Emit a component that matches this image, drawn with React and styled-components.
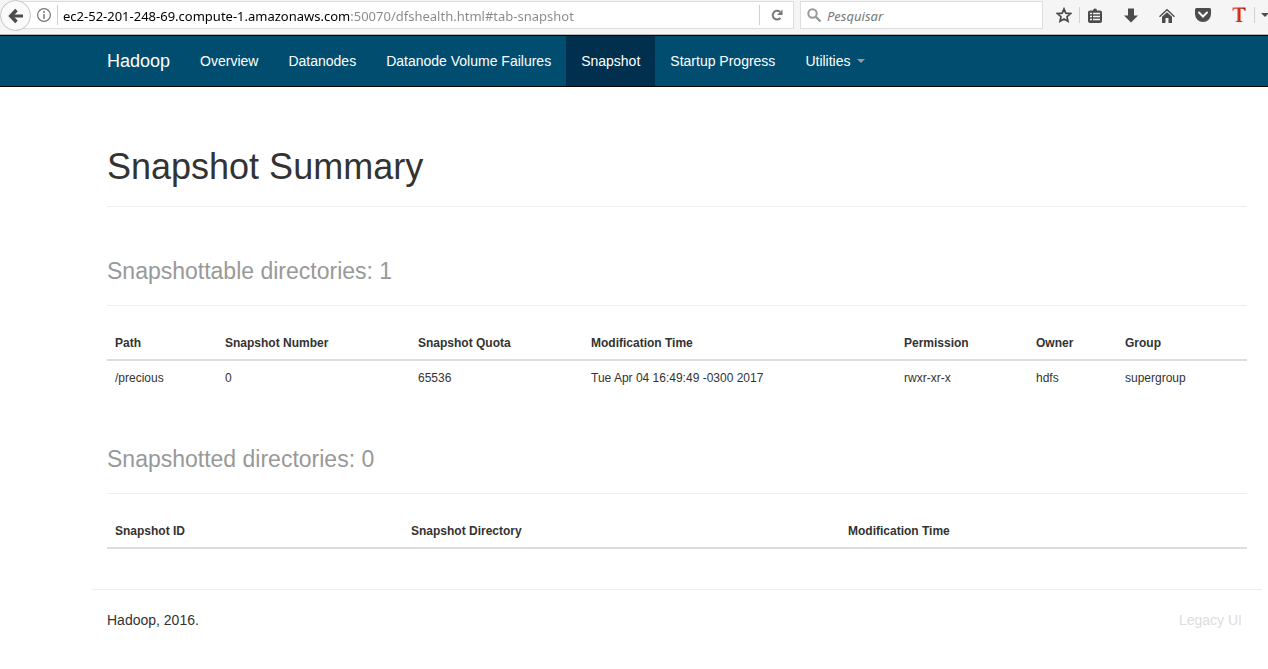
import React from "react";
import styled, { createGlobalStyle } from "styled-components";

const GlobalStyle = createGlobalStyle`
  *, *::before, *::after { box-sizing: border-box; }
  body {
    margin: 0;
    background: #fff;
    color: #333;
    font-family: "Liberation Sans", Arial, sans-serif;
    font-size: 14px;
    line-height: 20px;
  }
  button, input { font: inherit; color: inherit; }
`;

/* Browser toolbar */
const Toolbar = styled.header`
  display: flex;
  align-items: flex-start;
  height: 35px;
  padding-top: 1px;
  background: #f5f5f5;
  border-bottom: 1px solid #b8b8b8;
  font-family: "Noto Sans", "Open Sans", sans-serif;
  overflow: hidden;
`;

const IconButton = styled.button`
  display: flex;
  flex: none;
  align-items: center;
  justify-content: center;
  width: ${(p) => p.$width || 36}px;
  height: 28px;
  padding: 0;
  border: 0;
  background: none;
  color: #4c4c4c;
  svg { display: block; flex: none; }
`;

const BackButton = styled(IconButton)`
  position: relative;
  width: 31px;
  height: 31px;
  margin: -1px -20px 0 0;
  border: 1px solid #c4c4c4;
  border-radius: 50%;
  background: #fafafa;
`;

const OverflowButton = styled(IconButton)`
  justify-content: flex-start;
  padding-left: 6px;
`;

const AddressBar = styled.div`
  display: flex;
  flex: 1;
  align-items: center;
  min-width: 0;
  height: 28px;
  padding-left: 19px;
  background: #fff;
  border: 1px solid #dedede;
`;

const Separator = styled.span`
  flex: none;
  width: 1px;
  height: ${(p) => p.$height}px;
  background: #d0d0d0;
`;

const AddressInput = styled.input`
  flex: 1;
  min-width: 0;
  height: 26px;
  padding: 2px 0 0 5px;
  border: 0;
  outline: 0;
  font-size: 13px;
  color: #000;
  background: linear-gradient(to right, #000 292px, #888 292px);
  -webkit-background-clip: text;
  background-clip: text;
  -webkit-text-fill-color: transparent;
`;

const SearchBox = styled.label`
  display: flex;
  flex: none;
  align-items: center;
  gap: 5px;
  width: 243px;
  height: 28px;
  margin: 0 5px 0 6px;
  padding-left: 6px;
  background: #fff;
  border: 1px solid #dedede;
`;

const SearchInput = styled.input`
  flex: 1;
  min-width: 0;
  height: 26px;
  padding: 2px 0 0;
  border: 0;
  outline: 0;
  background: none;
  font-size: 13px;
  &::placeholder { color: #777; font-style: italic; opacity: 1; }
`;

const ToolbarActions = styled.div`
  display: flex;
  flex: none;
  align-items: center;
  height: 28px;
`;

/* Hadoop navigation */
const Navbar = styled.nav`
  display: flex;
  padding-left: 92px;
  background: #014d6f;
  border-top: 1px solid #000;
  border-bottom: 1px solid #000;
`;

const Brand = styled.a`
  padding: 15px;
  color: #fff;
  font-size: 18px;
  line-height: 20px;
  text-decoration: none;
`;

const NavList = styled.ul`
  display: flex;
  margin: 0;
  padding: 0;
  list-style: none;
`;

const NavLink = styled.a`
  display: flex;
  align-items: center;
  gap: 6px;
  padding: 15px;
  color: #fff;
  background: ${(p) => (p.$active ? "#00304d" : "transparent")};
  text-decoration: none;
`;

const Caret = styled.span`
  border-top: 4px solid #999;
  border-left: 4px solid transparent;
  border-right: 4px solid transparent;
`;

/* Page body */
const Container = styled.div`
  padding: 0 6px 0 92px;
`;

const Main = styled.main`
  padding: 60px 15px 40px;
`;

const PageTitle = styled.h1`
  margin: 0;
  padding-bottom: 19px;
  border-bottom: 1px solid #eee;
  font-size: 36px;
  font-weight: 400;
  line-height: 40px;
`;

const SectionTitle = styled.h2`
  margin: 51px 0 20px;
  padding-bottom: 21px;
  border-bottom: 1px solid #eee;
  color: #999;
  font-size: 23px;
  font-weight: 400;
  line-height: 26px;
`;

const DataTable = styled.table`
  width: 100%;
  table-layout: fixed;
  border-collapse: separate;
  border-spacing: 0;
  font-size: 12px;
  line-height: 17px;
`;

const Column = styled.col`
  width: ${(p) => p.$width}px;
`;

const HeadCell = styled.th`
  padding: 9px 8px 7px;
  border-bottom: 2px solid #ddd;
  text-align: left;
`;

const Cell = styled.td`
  padding: 9px 8px 8px;
`;

const Footer = styled.footer`
  display: flex;
  justify-content: space-between;
  padding: 20px 20px 20px 15px;
  border-top: 1px solid #eee;
`;

const LegacyLink = styled.a`
  color: #ddd;
  text-decoration: none;
`;

const navItems = ["Overview", "Datanodes", "Datanode Volume Failures", "Snapshot", "Startup Progress", "Utilities"];

const snapshottable = {
  columns: [
    ["Path", 110],
    ["Snapshot Number", 193],
    ["Snapshot Quota", 173],
    ["Modification Time", 313],
    ["Permission", 132],
    ["Owner", 89],
    ["Group", 130],
  ],
  rows: [["/precious", "0", "65536", "Tue Apr 04 16:49:49 -0300 2017", "rwxr-xr-x", "hdfs", "supergroup"]],
};

const snapshotted = {
  columns: [
    ["Snapshot ID", 296],
    ["Snapshot Directory", 437],
    ["Modification Time", 407],
  ],
  rows: [],
};

function DirectoryTable({ data, label }) {
  return (
    <DataTable aria-label={label}>
      <colgroup>
        {data.columns.map(([name, width]) => <Column key={name} $width={width} />)}
      </colgroup>
      <thead>
        <tr>{data.columns.map(([name]) => <HeadCell key={name} scope="col">{name}</HeadCell>)}</tr>
      </thead>
      {data.rows.length > 0 && (
        <tbody>
          {data.rows.map((row) => (
            <tr key={row[0]}>{row.map((value) => <Cell key={value}>{value}</Cell>)}</tr>
          ))}
        </tbody>
      )}
    </DataTable>
  );
}

function BrowserToolbar() {
  return (
    <Toolbar>
      <BackButton aria-label="Back">
        <svg width="16" height="16" viewBox="0 0 16 16" fill="none" stroke="#4c4c4c">
          <path d="M8.500 2 2.800 8l5.700 6" strokeWidth="3.600" />
          <path d="M3 8h12" strokeWidth="3" />
        </svg>
      </BackButton>
      <AddressBar>
        <IconButton $width={26} aria-label="Site information">
          <svg width="14" height="14" viewBox="0 0 14 14" fill="none" stroke="#777">
            <circle cx="7" cy="7" r="6.400" strokeWidth="1.200" />
            <path d="M7 6v5M7 3v2" strokeWidth="1.500" />
          </svg>
        </IconButton>
        <Separator $height={20} />
        <AddressInput
          aria-label="Address"
          defaultValue="ec2-52-201-248-69.compute-1.amazonaws.com:50070/dfshealth.html#tab-snapshot"
        />
        <Separator $height={20} />
        <IconButton $width={33} aria-label="Reload">
          <svg width="12" height="12" viewBox="0 0 12 12" fill="none">
            <path d="M9.500 9A4.400 4.400 0 1 1 9 2.800" stroke="#777" strokeWidth="2" />
            <path d="M11.500.500V6H6z" fill="#777" />
          </svg>
        </IconButton>
      </AddressBar>
      <SearchBox>
        <svg width="15" height="15" viewBox="0 0 15 15" fill="none" stroke="#999">
          <circle cx="5.500" cy="5.500" r="4.200" strokeWidth="2" />
          <path d="m8.500 8.500 5 5" strokeWidth="2.400" />
        </svg>
        <SearchInput aria-label="Search" placeholder="Pesquisar" />
      </SearchBox>
      <ToolbarActions>
        <IconButton $width={31} aria-label="Bookmark this page">
          <svg width="16" height="16" viewBox="0 0 16 16" fill="none" stroke="#4c4c4c" strokeWidth="1.700">
            <path d="m8 1.900 1.800 4.300 4.700.4-3.500 3.100 1 4.600L8 11.900l-4 2.400 1-4.600L1.500 6.600l4.700-.4z" />
          </svg>
        </IconButton>
        <Separator $height={16} />
        <IconButton $width={30} aria-label="Show bookmarks">
          <svg width="14" height="15" viewBox="0 0 14 15">
            <path d="M2 2.500h3a2 2 0 0 1 4 0h3a2 2 0 0 1 2 2V13a2 2 0 0 1-2 2H2a2 2 0 0 1-2-2V4.500a2 2 0 0 1 2-2z" fill="#4c4c4c" />
            <path d="M2 5.500h2M5 5.500h7M2 8.500h2M5 8.500h7M2 11.500h2M5 11.500h7" stroke="#f5f5f5" strokeWidth="1.500" />
          </svg>
        </IconButton>
        <IconButton $width={41} aria-label="Downloads">
          <svg width="14" height="15" viewBox="0 0 14 15" fill="#4c4c4c"><path d="M4 .500h6v7h4l-7 7-7-7h4z" /></svg>
        </IconButton>
        <IconButton $width={31} aria-label="Home">
          <svg width="16" height="15" viewBox="0 0 16 15" fill="#4c4c4c">
            <path d="m8 4.200 5 4.600V15H9.500v-5h-3v5H3V8.800z" />
            <path d="m.5 8.700 7.500-7 7.500 7" fill="none" stroke="#4c4c4c" strokeWidth="1.300" />
          </svg>
        </IconButton>
        <IconButton $width={41} aria-label="Save to Pocket">
          <svg width="16" height="14" viewBox="0 0 16 14">
            <path d="M1.500 0h13A1.500 1.500 0 0 1 16 1.500V6A8 8 0 0 1 0 6V1.500A1.500 1.500 0 0 1 1.500 0z" fill="#4c4c4c" />
            <path d="m4 4.500 4 4 4-4" fill="none" stroke="#f5f5f5" strokeWidth="2" strokeLinecap="round" />
          </svg>
        </IconButton>
        <IconButton $width={31} aria-label="T extension">
          <svg width="14" height="16" viewBox="0 0 14 16">
            <defs>
              <linearGradient id="extension-red" x1="0" x2="1">
                <stop offset="0" stopColor="#e8604c" />
                <stop offset="0.500" stopColor="#d42d17" />
                <stop offset="1" stopColor="#a31408" />
              </linearGradient>
            </defs>
            <path d="M.5.500h13v3.500h-.8c-.3-1.800-1-2.300-4.200-2.300v12l1.800.600v.700H3.700v-.700l1.800-.600v-12c-3.200 0-3.900.500-4.200 2.300H.5z" fill="url(#extension-red)" />
          </svg>
        </IconButton>
        <Separator $height={16} />
        <OverflowButton $width={13} aria-label="More tools">
          <svg width="8" height="4" viewBox="0 0 8 4" fill="#4c4c4c"><path d="M0 0h8L4 4z" /></svg>
        </OverflowButton>
      </ToolbarActions>
    </Toolbar>
  );
}

export default function App() {
  return (
    <>
      <GlobalStyle />
      <BrowserToolbar />
      <Navbar aria-label="Main">
        <Brand href="#">Hadoop</Brand>
        <NavList>
          {navItems.map((name) => (
            <li key={name}>
              <NavLink href="#" $active={name === "Snapshot"}>
                {name}
                {name === "Utilities" && <Caret />}
              </NavLink>
            </li>
          ))}
        </NavList>
      </Navbar>
      <Container>
        <Main>
          <PageTitle>Snapshot Summary</PageTitle>
          <SectionTitle>Snapshottable directories: 1</SectionTitle>
          <DirectoryTable data={snapshottable} label="Snapshottable directories" />
          <SectionTitle>Snapshotted directories: 0</SectionTitle>
          <DirectoryTable data={snapshotted} label="Snapshotted directories" />
        </Main>
        <Footer>
          <span>Hadoop, 2016.</span>
          <LegacyLink href="#">Legacy UI</LegacyLink>
        </Footer>
      </Container>
    </>
  );
}
